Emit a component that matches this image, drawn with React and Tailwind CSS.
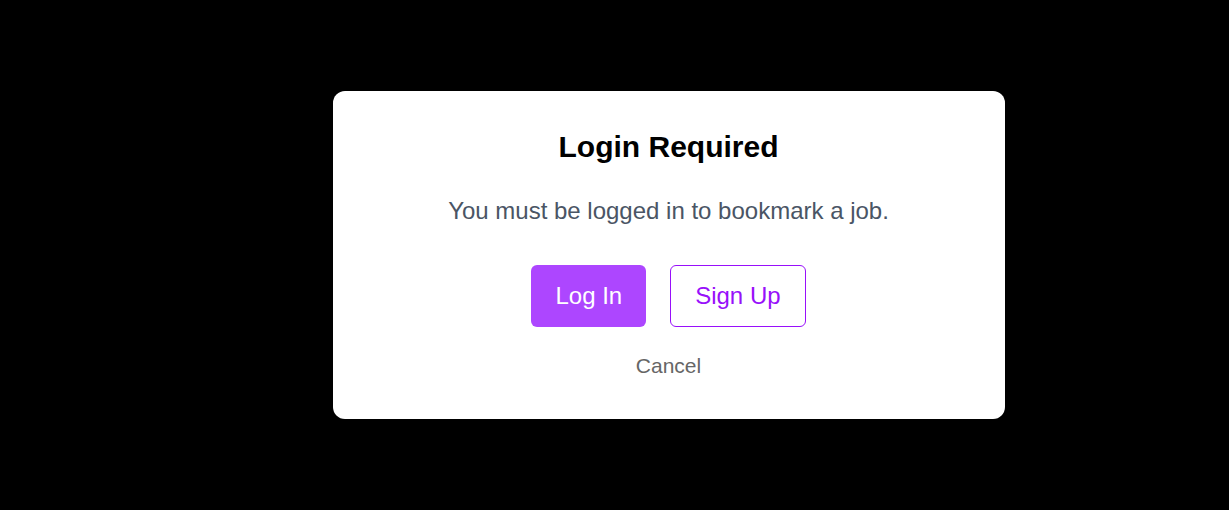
import React from "react";

const LoginModal = () => {
  return (
    <div className="w-[672px] bg-white rounded-xl text-center pt-[38px] pb-[39px] flex flex-col items-center">
      <h2 className="text-3xl font-bold text-black">Login Required</h2>
      <p className="mt-[30px] text-2xl text-gray-600">
        You must be logged in to bookmark a job.
      </p>

      <div className="mt-[38px] flex gap-6">
        <button className="bg-purple-500 text-white text-2xl leading-9 px-6 py-3 rounded-md">
          Log In
        </button>
        <button className="border border-purple-600 text-purple-600 text-2xl leading-9 px-6 py-3 rounded-md">
          Sign Up
        </button>
      </div>

      <button className="mt-[25px] text-[21px] leading-7 text-[#666666]">Cancel</button>
    </div>
  );
};

export default function App() {
  return (
    <div className="h-screen bg-black flex items-center justify-center pl-[108px] font-['Liberation_Sans',Arial,sans-serif]">
      <LoginModal />
    </div>
  );
}
